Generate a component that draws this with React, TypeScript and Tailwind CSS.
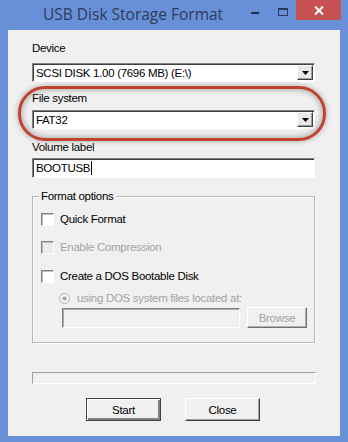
const ui = "font-['Liberation_Sans',Arial,sans-serif] text-[11.5px] leading-[14px] tracking-[-0.3px]";

function Combo({ value }: { value: string }) {
  return (
    <div className="flex h-[19px] w-[283px] border-t border-l border-t-[#808080] border-l-[#808080] border-b border-r border-b-white border-r-white bg-white shadow-[inset_1px_1px_0_#404040]">
      <div className="flex-1 pl-[3px] pt-[2px] text-black">{value}</div>
      <div className="mr-[1px] mt-[1px] flex h-[15px] w-[16px] items-center justify-center border-t border-l border-white border-b border-r border-b-[#404040] border-r-[#404040] bg-[#e8e8e8] shadow-[inset_-1px_-1px_0_#a0a0a0]">
        <svg width="7" height="4" viewBox="0 0 7 4">
          <path d="M0 0h7L3.5 4z" fill="#000" />
        </svg>
      </div>
    </div>
  );
}

function Check({ label, disabled }: { label: string; disabled?: boolean }) {
  return (
    <div className="flex items-center gap-[6px]">
      <div
        className={`h-[13px] w-[13px] border border-t-[#808080] border-l-[#808080] border-b-white border-r-white shadow-[inset_1px_1px_0_#c0c0c0] ${
          disabled ? "bg-[#ebebeb]" : "bg-white"
        }`}
      />
      <span className={disabled ? "text-[#a3a3a3]" : "text-black"}>{label}</span>
    </div>
  );
}

function Button({ label, primary }: { label: string; primary?: boolean }) {
  return (
    <div
      className={`flex h-[23px] w-[75px] items-center justify-center bg-[#f0f0f0] ${
        primary
          ? "border border-[#404040] shadow-[inset_1px_1px_0_#fff,inset_-2px_-2px_0_#808080]"
          : "border border-t-white border-l-white border-b-[#404040] border-r-[#404040] shadow-[inset_-1px_-1px_0_#a0a0a0]"
      }`}
    >
      {label}
    </div>
  );
}

export default function App() {
  return (
    <div className="relative flex h-[442px] w-[348px] flex-col bg-[#6890d8]">
      <div className="flex h-[30px] items-start">
        <div className="flex-1 pl-[43px] pt-[3px] font-['Open_Sans',sans-serif] text-[15.5px] leading-[22px] text-[#2d3b57]">
          USB Disk Storage Format
        </div>
        <div className="mt-[12px] h-[2px] w-[8px] bg-[#1c2b45]" />
        <div className="ml-[19px] mt-[8px] h-[8px] w-[10px] border border-[#2a3a5a] border-t-2" />
        <div className="ml-[8px] mr-[7px] flex h-[20px] w-[45px] items-center justify-center bg-[#c75050]">
          <svg width="10" height="9" viewBox="0 0 10 9">
            <path d="M1 0.5l8 8M9 0.5l-8 8" stroke="#fff" strokeWidth="2" />
          </svg>
        </div>
      </div>

      <div className={`mx-[8px] h-[406px] bg-[#f0f0f0] pl-[24px] pt-[11px] ${ui}`}>
        <div className="h-[14px] text-black">Device</div>
        <div className="mt-[8px]">
          <Combo value="SCSI DISK 1.00 (7696 MB) (E:\)" />
        </div>
        <div className="mt-[9px] h-[14px]">File system</div>
        <div className="mt-[5px]">
          <Combo value="FAT32" />
        </div>
        <div className="mt-[11px] h-[14px]">Volume label</div>
        <div className="mt-[4px] flex h-[20px] w-[283px] items-center border border-t-[#808080] border-l-[#808080] border-b-white border-r-white bg-white pl-[3px] shadow-[inset_1px_1px_0_#404040]">
          BOOTUSB
          <span className="ml-[1px] h-[14px] w-[1px] bg-black" />
        </div>

        <div className="relative mt-[18px] h-[147px] w-[283px] border border-[#b5b5b5] shadow-[inset_1px_1px_0_#fff,1px_1px_0_#fff]">
          <div className="absolute -top-[8px] left-[6px] bg-[#f0f0f0] px-[2px]">Format options</div>
          <div className="pl-[8px] pt-[15px]">
            <Check label="Quick Format" />
            <div className="mt-[14px]">
              <Check label="Enable Compression" disabled />
            </div>
            <div className="mt-[15px]">
              <Check label="Create a DOS Bootable Disk" />
            </div>
            <div className="mt-[8px] flex items-center gap-[7px] pl-[18px] text-[#a3a3a3]">
              <svg width="11" height="11" viewBox="0 0 11 11">
                <circle cx="5.5" cy="5.5" r="5" fill="#f4f4f4" stroke="#b0b0b0" />
                <circle cx="5.5" cy="5.5" r="2" fill="#a0a0a0" />
              </svg>
              <span>using DOS system files located at:</span>
            </div>
            <div className="mt-[2px] flex items-center gap-[7px] pl-[21px]">
              <div className="h-[20px] w-[178px] border border-t-[#808080] border-l-[#808080] border-b-white border-r-white bg-[#f0f0f0] shadow-[inset_1px_1px_0_#a8a8a8]" />
              <div className="flex h-[21px] w-[60px] items-center justify-center border border-t-white border-l-white border-b-[#707070] border-r-[#707070] text-[#a3a3a3] shadow-[inset_-1px_-1px_0_#b0b0b0]">
                Browse
              </div>
            </div>
          </div>
        </div>

        <div className="mt-[29px] h-[12px] w-[284px] border border-t-[#a0a0a0] border-l-[#a0a0a0] border-b-white border-r-white" />

        <div className="mt-[14px] flex gap-[24px] pl-[54px]">
          <Button label="Start" primary />
          <Button label="Close" />
        </div>
      </div>

      <div className="pointer-events-none absolute left-[18px] top-[86px] h-[55px] w-[308px] rounded-[27px] border-[3px] border-[#c0422c] shadow-[0_0_4px_1px_rgba(120,120,120,0.45),inset_0_0_5px_2px_rgba(120,120,120,0.45)]" />
    </div>
  );
}
